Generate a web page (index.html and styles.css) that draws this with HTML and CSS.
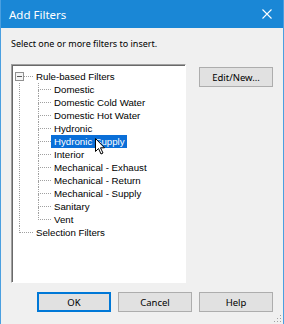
FILE: index.html
```html
<!DOCTYPE html>
<html>
<head>
    <title>Add Filters</title>
    <link rel="stylesheet" href="styles.css">
</head>
<body>
<div class="window">
    <div class="titlebar">
        <span class="title">Add Filters</span>
        <svg class="close" width="10" height="10" viewBox="0 0 10 10">
            <path d="M0.5 0.5 L9.5 9.5 M9.5 0.5 L0.5 9.5" stroke="#fff" stroke-width="1.1" fill="none"/>
        </svg>
    </div>

    <div class="content">
        <p class="intro">Select one or more filters to insert.</p>

        <div class="main">
            <div class="tree">
                <div class="row">
                    <span class="expander"></span>
                    <span class="hline"></span>
                    <span class="label">Rule-based Filters</span>
                </div>
                <div class="children">
                    <div class="row child"><span class="conn"><i class="top"></i><i class="bottom"></i></span><span class="label">Domestic</span></div>
                    <div class="row child"><span class="conn"><i class="top"></i><i class="bottom"></i></span><span class="label">Domestic Cold Water</span></div>
                    <div class="row child"><span class="conn"><i class="top"></i><i class="bottom"></i></span><span class="label">Domestic Hot Water</span></div>
                    <div class="row child"><span class="conn"><i class="top"></i><i class="bottom"></i></span><span class="label">Hydronic</span></div>
                    <div class="row child"><span class="conn"><i class="top"></i><i class="bottom"></i></span><span class="label selected">Hydronic Supply</span></div>
                    <div class="row child"><span class="conn"><i class="top"></i><i class="bottom"></i></span><span class="label">Interior</span></div>
                    <div class="row child"><span class="conn"><i class="top"></i><i class="bottom"></i></span><span class="label">Mechanical - Exhaust</span></div>
                    <div class="row child"><span class="conn"><i class="top"></i><i class="bottom"></i></span><span class="label">Mechanical - Return</span></div>
                    <div class="row child"><span class="conn"><i class="top"></i><i class="bottom"></i></span><span class="label">Mechanical - Supply</span></div>
                    <div class="row child"><span class="conn"><i class="top"></i><i class="bottom"></i></span><span class="label">Sanitary</span></div>
                    <div class="row child last"><span class="conn"><i class="top"></i><i class="bottom"></i></span><span class="label">Vent</span></div>
                </div>
                <div class="row root-last"><span class="conn"><i class="top"></i></span><span class="label">Selection Filters</span></div>

                <svg class="cursor" width="12" height="18" viewBox="0 0 12 18">
                    <path d="M0.5 0.5 L0.5 13.5 L3.5 10.5 L6 16 L8 15 L5.5 9.8 L9.5 9.8 Z" fill="#fff" stroke="#000" stroke-width="1"/>
                </svg>
            </div>

            <div class="side">
                <button class="btn">Edit/New...</button>
            </div>
        </div>

        <div class="footer">
            <button class="btn default">OK</button>
            <button class="btn">Cancel</button>
            <button class="btn">Help</button>
        </div>
    </div>

    <svg class="grip" width="8" height="8" viewBox="0 0 8 8">
        <rect x="6" y="0" width="1" height="1" fill="#a0a0a0"/>
        <rect x="3" y="3" width="1" height="1" fill="#a0a0a0"/>
        <rect x="6" y="3" width="1" height="1" fill="#a0a0a0"/>
        <rect x="0" y="6" width="1" height="1" fill="#a0a0a0"/>
        <rect x="3" y="6" width="1" height="1" fill="#a0a0a0"/>
        <rect x="6" y="6" width="1" height="1" fill="#a0a0a0"/>
    </svg>
</div>
</body>
</html>
```

FILE: styles.css
```css
body {
    margin: 0;
    padding: 0;
    font-family: "Noto Sans", sans-serif;
    background-color: #f0f0f0;
}
.window {
    position: relative;
    width: 284px;
    height: 324px;
    box-sizing: border-box;
    border-left: 1px solid #4a9fe0;
    border-right: 1px solid #4a9fe0;
    background-color: #f0f0f0;
    display: flex;
    flex-direction: column;
}
.titlebar {
    height: 28px;
    background-color: #1a87d6;
    display: flex;
    align-items: center;
    justify-content: space-between;
    padding: 0 11px 0 8px;
    flex-shrink: 0;
}
.title {
    color: #fff;
    font-size: 11.5px;
}
.content {
    flex: 1;
    display: flex;
    flex-direction: column;
    padding: 0 10px 0 10px;
}
.intro {
    margin: 9px 0 0 0;
    font-size: 9px;
    line-height: 14px;
    color: #000;
}
.main {
    display: flex;
    margin-top: 13px;
}
.tree {
    position: relative;
    width: 175px;
    height: 219px;
    box-sizing: border-box;
    background-color: #fff;
    border: 1px solid;
    border-color: #a0a0a0 #fff #fff #a0a0a0;
    box-shadow: inset 1px 1px 0 #696969;
    padding: 5px 0 0 3px;
    font-family: "Liberation Sans", Arial, sans-serif;
    font-size: 9.7px;
    color: #000;
}
.row {
    display: flex;
    align-items: center;
    height: 13px;
}
.label {
    padding: 0 2px 0 3px;
    line-height: 13px;
    white-space: nowrap;
}
.label.selected {
    background-color: #0a6fd8;
    color: #fff;
}
.expander {
    width: 9px;
    height: 9px;
    box-sizing: border-box;
    border: 1px solid #919191;
    background: linear-gradient(#5a5a5a, #5a5a5a) no-repeat center / 5px 1px, #f4f4f4;
}
.hline {
    width: 9px;
    border-top: 1px dotted #a0a0a0;
}
.children {
    margin-left: 4px;
    padding-left: 18px;
    border-left: 1px dotted #a0a0a0;
}
.conn {
    display: flex;
    flex-direction: column;
    width: 13px;
    height: 13px;
    flex-shrink: 0;
}
.conn .top {
    height: 6px;
    border-left: 1px dotted #a0a0a0;
    border-bottom: 1px dotted #a0a0a0;
}
.conn .bottom {
    flex: 1;
    border-left: 1px dotted #a0a0a0;
}
.child.last .conn .bottom {
    border-left: none;
}
.root-last .conn {
    margin-left: 4px;
    width: 14px;
}
.cursor {
    position: absolute;
    left: 83px;
    top: 73px;
}
.side {
    flex: 1;
    display: flex;
    justify-content: flex-end;
    align-items: flex-start;
    padding-top: 3px;
}
.btn {
    width: 74px;
    height: 20px;
    box-sizing: border-box;
    background-color: #e1e1e1;
    border: 1px solid #adadad;
    font-family: "Noto Sans", sans-serif;
    font-size: 9.5px;
    color: #000;
    padding: 0;
}
.btn.default {
    border: 2px solid #0078d7;
}
.footer {
    display: flex;
    justify-content: flex-end;
    gap: 7px;
    margin-top: 9px;
}
.grip {
    position: absolute;
    right: 1px;
    bottom: 1px;
}
```
